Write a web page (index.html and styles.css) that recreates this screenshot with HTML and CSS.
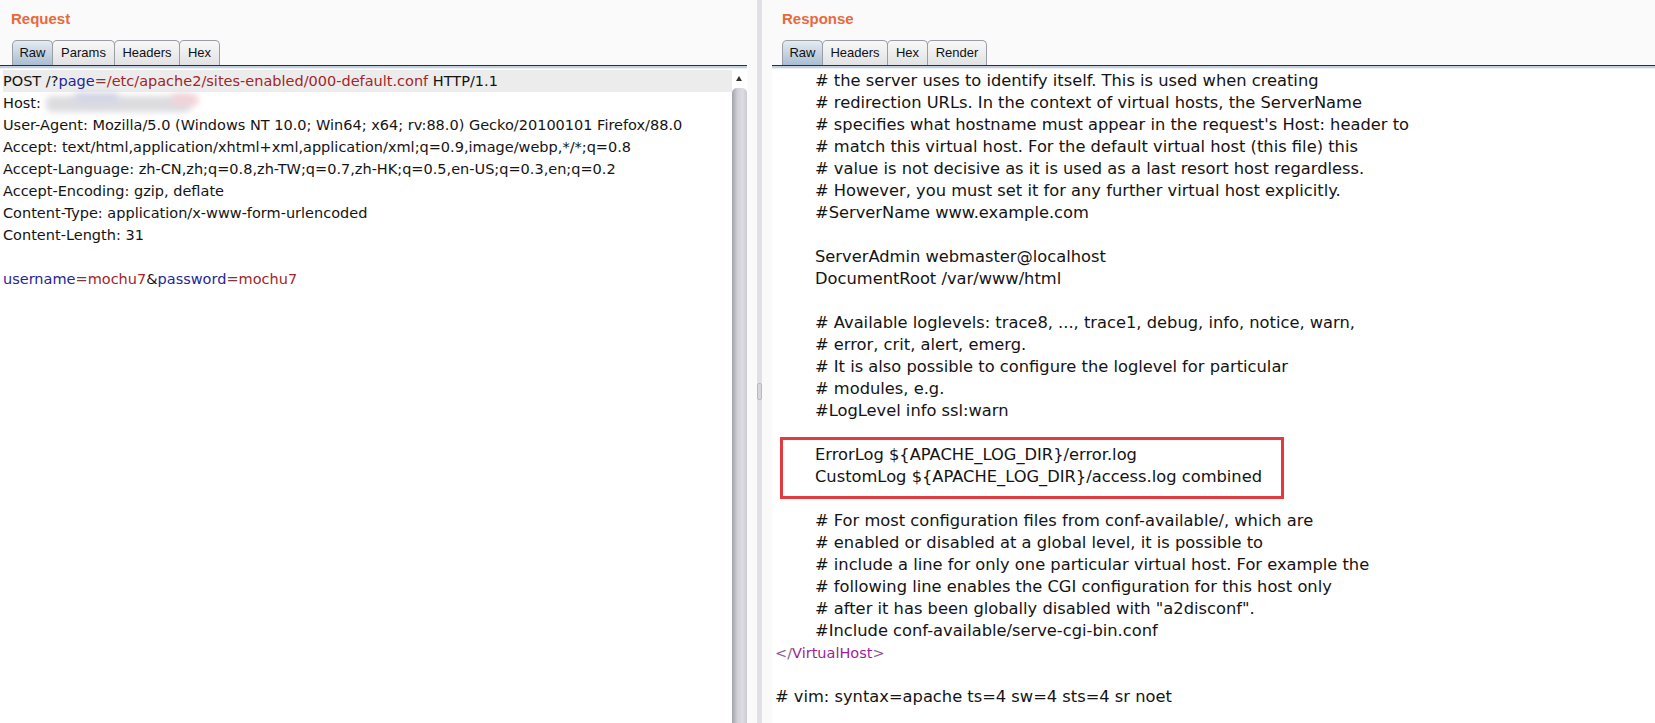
FILE: index.html
```html
<!DOCTYPE html>
<html lang="en">
<head>
  <meta charset="UTF-8">
  <title>Request / Response</title>
  <link rel="stylesheet" href="styles.css">
</head>
<body>
  <div class="app">

    <!-- Request -->
    <div class="pane pane-req">
      <div class="title">Request</div>
      <div class="tabs">
        <span class="tab on t-raw">Raw</span>
        <span class="tab t-params">Params</span>
        <span class="tab t-headers">Headers</span>
        <span class="tab t-hex">Hex</span>
      </div>
      <div class="rule"></div>
      <div class="editor">
<pre class="code"><span class="cur">POST /?<span class="k">page</span><span class="eq">=</span><span class="v">/etc/apache2/sites-enabled/000-default.conf</span> HTTP/1.1</span>Host: <span class="blur"><i class="b1"></i><i class="b2"></i><i class="b3"></i></span>
User-Agent: Mozilla/5.0 (Windows NT 10.0; Win64; x64; rv:88.0) Gecko/20100101 Firefox/88.0
Accept: text/html,application/xhtml+xml,application/xml;q=0.9,image/webp,*/*;q=0.8
Accept-Language: zh-CN,zh;q=0.8,zh-TW;q=0.7,zh-HK;q=0.5,en-US;q=0.3,en;q=0.2
Accept-Encoding: gzip, deflate
Content-Type: application/x-www-form-urlencoded
Content-Length: 31

<span class="k">username</span><span class="eq">=</span><span class="v">mochu7</span>&amp;<span class="k">password</span><span class="eq">=</span><span class="v">mochu7</span></pre>
        <div class="vscroll">
          <div class="arrow"></div>
          <div class="thumb"></div>
        </div>
      </div>
    </div>

    <div class="splitter"><div class="grip"></div></div>

    <!-- Response -->
    <div class="pane pane-res">
      <div class="title">Response</div>
      <div class="tabs">
        <span class="tab on t-raw">Raw</span>
        <span class="tab t-headers">Headers</span>
        <span class="tab t-hex">Hex</span>
        <span class="tab t-render">Render</span>
      </div>
      <div class="rule"></div>
      <div class="editor">
<pre class="code code-res">	# the server uses to identify itself. This is used when creating
	# redirection URLs. In the context of virtual hosts, the ServerName
	# specifies what hostname must appear in the request's Host: header to
	# match this virtual host. For the default virtual host (this file) this
	# value is not decisive as it is used as a last resort host regardless.
	# However, you must set it for any further virtual host explicitly.
	#ServerName www.example.com

	ServerAdmin webmaster@localhost
	DocumentRoot /var/www/html

	# Available loglevels: trace8, ..., trace1, debug, info, notice, warn,
	# error, crit, alert, emerg.
	# It is also possible to configure the loglevel for particular
	# modules, e.g.
	#LogLevel info ssl:warn

	ErrorLog ${APACHE_LOG_DIR}/error.log
	CustomLog ${APACHE_LOG_DIR}/access.log combined

	# For most configuration files from conf-available/, which are
	# enabled or disabled at a global level, it is possible to
	# include a line for only one particular virtual host. For example the
	# following line enables the CGI configuration for this host only
	# after it has been globally disabled with "a2disconf".
	#Include conf-available/serve-cgi-bin.conf
<span class="br">&lt;/</span><span class="tag">VirtualHost</span><span class="br">&gt;</span>

# vim: syntax=apache ts=4 sw=4 sts=4 sr noet</pre>
        <div class="mark"></div>
      </div>
    </div>

  </div>
</body>
</html>
```

FILE: styles.css
```css
*{box-sizing: border-box;}
body{
  margin: 0;
  background-color: #fafafa;
  font-family: "DejaVu Sans", sans-serif;
}
.app{
  display: flex;
  height: 723px;
  overflow: hidden;
}

/* panes */
.pane{
  display: flex;
  flex-direction: column;
}
.pane-req{width: 757px; padding-right: 10px;}
.pane-res{flex: 1; padding-left: 10px;}

.title{
  height: 40px;
  padding: 9px 0 0 11px;
  font: bold 15px/20px "Liberation Sans", Arial, sans-serif;
  color: #e8693c;
}
.pane-res .title{padding-left: 10px;}

/* tabs */
.tabs{
  display: flex;
  height: 25px;
  padding-left: 12px;
}
.pane-res .tabs{padding-left: 10px;}
.tab{
  border: 1px solid #9a9da4;
  border-bottom: none;
  border-radius: 5px 5px 0 0;
  margin-right: -1px;
  background: linear-gradient(#f8f8f8, #e2e2e4);
  font: 13px/24px "Liberation Sans", Arial, sans-serif;
  color: #111;
  text-align: center;
}
.tab.on{background: linear-gradient(#e4ebf2, #a9bdd2);}
.t-raw{width: 41px;}
.t-params{width: 63px;}
.t-headers{width: 66px;}
.t-hex{width: 41px;}
.t-render{width: 60px;}

.rule{
  height: 4px;
  border-top: 1px solid #22304a;
  background-color: #c3d0df;
  border-bottom: 1px solid #eef1f4;
}

/* editor */
.editor{
  flex: 1;
  display: flex;
  background-color: #fff;
  position: relative;
}
.code{
  flex: 1;
  margin: 0;
  padding: 1px 0 0 3px;
  font: 14.5px/22px "DejaVu Sans", sans-serif;
  color: #141414;
  white-space: pre;
}
.code-res{
  font-size: 16.3px;
  tab-size: 40px;
}
.cur{
  display: block;
  background-color: #ececec;
}
.k{color: #25259a;}
.v{color: #a3252a;}
.eq{color: #7a3a3a;}
.tag, .br{font-size: 14.5px;}
.tag{color: #9a1f9a;}
.br{color: #8a5a8e;}

/* blurred host */
.blur{
  display: inline-block;
  position: relative;
  width: 150px;
  height: 22px;
  vertical-align: top;
}
.blur i{
  position: absolute;
  filter: blur(3px);
  border-radius: 6px;
}
.blur .b1{left: 0; top: 4px; width: 145px; height: 16px; background-color: #dcdce0;}
.blur .b2{left: 28px; top: 1px; width: 45px; height: 10px; background-color: #d3d5e8;}
.blur .b3{left: 125px; top: 2px; width: 28px; height: 12px; background-color: #f1d3d8;}

/* scrollbar */
.vscroll{
  width: 15px;
  display: flex;
  flex-direction: column;
}
.arrow{
  height: 19px;
  background-color: #fff;
  position: relative;
}
.arrow:after{
  content: '';
  position: absolute;
  left: 4px;
  top: 7px;
  border-left: 3px solid transparent;
  border-right: 3px solid transparent;
  border-bottom: 5px solid #333;
}
.thumb{
  flex: 1;
  border-radius: 5px 5px 0 0;
  background: linear-gradient(to right, #a2a2aa, #cfcfd6 35%, #dcdce2 70%, #cacad0);
}

/* splitter */
.splitter{
  width: 5px;
  background-color: #e0e0e6;
}
.grip{
  margin-top: 383px;
  height: 17px;
  border: 1px solid #b9b9c2;
  border-radius: 2px;
  background-color: #d6d6dc;
}

/* red mark */
.mark{
  position: absolute;
  left: 8px;
  top: 368px;
  width: 504px;
  height: 62px;
  border: 3px solid #e23a3e;
}
```
